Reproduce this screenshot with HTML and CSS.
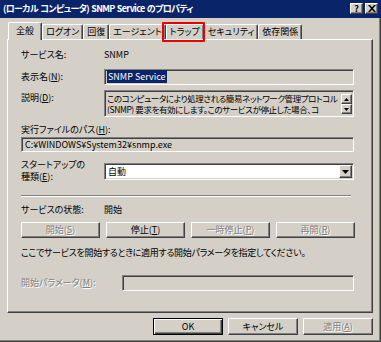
FILE: index.html
```html
<!DOCTYPE html>
<html>
<head>
	<title>SNMP Service のプロパティ</title>
	<meta charset="utf-8"/>
	<link rel="stylesheet" href="styles.css">
</head>
<body>

<div class="window">
	<div class="titlebar">
		<span class="title">(ローカル コンピュータ) SNMP Service のプロパティ</span>
		<div class="title-buttons">
			<span class="tbtn">?</span>
			<span class="tbtn">
				<svg width="8" height="7" viewBox="0 0 8 7"><path d="M0 0h2l2 2.2L6 0h2L5 3.5 8 7H6L4 4.8 2 7H0l3-3.5z" fill="#000"/></svg>
			</span>
		</div>
	</div>

	<div class="client">
		<div class="tabs">
			<div class="tab active">全般</div>
			<div class="tab">ログオン</div>
			<div class="tab">回復</div>
			<div class="tab">エージェント</div>
			<div class="tab">トラップ</div>
			<div class="tab">セキュリティ</div>
			<div class="tab">依存関係</div>
		</div>

		<div class="panel">
			<div class="row row-name">
				<span class="label">サービス名:</span>
				<span class="value">SNMP</span>
			</div>

			<div class="row row-display">
				<span class="label">表示名(<u>N</u>):</span>
				<div class="field sunken"><span class="selected">SNMP Service</span></div>
			</div>

			<div class="row row-desc">
				<span class="label label-top">説明(<u>D</u>):</span>
				<div class="field sunken desc">
					<div class="desc-text">
						<div>このコンピュータにより処理される簡易ネットワーク管理プロトコル</div>
						<div>(SNMP) 要求を有効にします。このサービスが停止した場合、コ</div>
					</div>
					<div class="scroll">
						<span class="sbtn"><svg width="5" height="3" viewBox="0 0 5 3"><path d="M2.5 0L5 3H0z" fill="#000"/></svg></span>
						<span class="sbtn"><svg width="5" height="3" viewBox="0 0 5 3"><path d="M0 0h5L2.5 3z" fill="#000"/></svg></span>
					</div>
				</div>
			</div>

			<div class="path-label">実行ファイルのパス(<u>H</u>):</div>
			<div class="field sunken path">C:¥WINDOWS¥System32¥snmp.exe</div>

			<div class="row row-startup">
				<span class="label label-two">スタートアップの<br>種類(<u>E</u>):</span>
				<div class="field sunken select">
					<span>自動</span>
					<span class="drop"><svg width="7" height="4" viewBox="0 0 7 4"><path d="M0 0h7L3.5 4z" fill="#000"/></svg></span>
				</div>
			</div>

			<div class="separator"></div>

			<div class="row row-status">
				<span class="label">サービスの状態:</span>
				<span class="value">開始</span>
			</div>

			<div class="actions">
				<span class="btn disabled">開始(<u>S</u>)</span>
				<span class="btn">停止(<u>T</u>)</span>
				<span class="btn disabled">一時停止(<u>P</u>)</span>
				<span class="btn disabled">再開(<u>R</u>)</span>
			</div>

			<p class="note">ここでサービスを開始するときに適用する開始パラメータを指定してください。</p>

			<div class="row row-params">
				<span class="label disabled wide">開始パラメータ(<u>M</u>):</span>
				<div class="field sunken params"></div>
			</div>
		</div>

		<div class="footer">
			<span class="btn default">OK</span>
			<span class="btn">キャンセル</span>
			<span class="btn disabled">適用(<u>A</u>)</span>
		</div>
	</div>

	<div class="mark"></div>
</div>

</body>
</html>
```

FILE: styles.css
```css
* {
	box-sizing: border-box;
}

body {
	margin: 0;
	background: #d4d0c8;
	color: #000;
	font-family: "Noto Sans CJK JP", sans-serif;
	font-size: 9px;
	line-height: 12px;
	font-feature-settings: "palt";
}

u {
	text-decoration: underline;
	text-underline-offset: 1px;
}

.window {
	position: relative;
	width: 381px;
	height: 342px;
	background: #d4d0c8;
	box-shadow: inset -1px -1px #404040, inset -2px -2px #808080;
}

/* title bar */
.titlebar {
	height: 18px;
	background: #0a246a;
	color: white;
	display: flex;
	align-items: center;
	justify-content: space-between;
	padding: 0 3px 0 3px;
}

.title {
	font-weight: bold;
	font-size: 9px;
	letter-spacing: -0.7px;
	word-spacing: 1px;
	white-space: nowrap;
}

.title-buttons {
	display: flex;
	gap: 2px;
	margin-top: -1px;
}

.tbtn {
	width: 13px;
	height: 11px;
	background: #d4d0c8;
	color: #000;
	font-weight: bold;
	font-size: 9px;
	line-height: 9px;
	display: flex;
	align-items: center;
	justify-content: center;
	border: 1px solid;
	border-color: #fff #404040 #404040 #fff;
	box-shadow: inset -1px -1px #808080;
}

/* tabs */
.client {
	padding: 4px 8px 0 7px;
}

.tabs {
	display: flex;
	align-items: flex-end;
	height: 17px;
	padding-left: 1px;
	position: relative;
	z-index: 2;
}

.tab {
	height: 15px;
	padding: 1px 3px 0 3px;
	white-space: nowrap;
	border-top: 1px solid #fff;
	border-left: 1px solid #fff;
	border-right: 1px solid #404040;
	box-shadow: inset -1px 0 #808080;
	border-radius: 2px 2px 0 0;
	background: #d4d0c8;
}

.tab.active {
	height: 18px;
	margin-bottom: -1px;
	padding: 2px 7px 0 7px;
}

.panel {
	height: 274px;
	border: 1px solid;
	border-color: #fff #404040 #404040 #fff;
	box-shadow: inset -1px -1px #808080;
	padding: 8px 0 0 13px;
}

/* rows */
.row {
	display: flex;
	align-items: flex-start;
}

.label {
	width: 83px;
	flex: none;
	white-space: nowrap;
}

.label.wide {
	width: 101px;
}

.row-name {
	height: 14px;
	line-height: 14px;
}

.row-display {
	margin-top: 7px;
	align-items: center;
}

.row-desc {
	margin-top: 5px;
}

.label-top {
	padding-top: 2px;
}

.field {
	width: 250px;
	background: #d4d0c8;
}

.sunken {
	border: 1px solid;
	border-color: #808080 #fff #fff #808080;
	box-shadow: inset 1px 1px #404040, inset -1px -1px #d4d0c8;
}

.row-display .field {
	height: 16px;
	padding: 1px 2px;
	line-height: 12px;
}

.selected {
	background: #0a246a;
	color: white;
	padding: 0 1px;
}

.desc {
	height: 27px;
	display: flex;
	padding: 2px 1px 2px 2px;
}

.desc-text {
	flex: 1;
	overflow: hidden;
	white-space: nowrap;
	font-size: 8.5px;
	line-height: 11px;
	letter-spacing: -0.4px;
}

.scroll {
	display: flex;
	flex-direction: column;
	width: 11px;
	flex: none;
	margin-top: 1px;
}

.sbtn {
	height: 11px;
	display: flex;
	align-items: center;
	justify-content: center;
	background: #d4d0c8;
	border: 1px solid;
	border-color: #fff #404040 #404040 #fff;
	box-shadow: inset -1px -1px #808080;
}

.path-label {
	margin-top: 7px;
	height: 12px;
	white-space: nowrap;
}

.path {
	width: 333px;
	height: 15px;
	margin-top: 1px;
	padding: 0 3px;
	line-height: 13px;
	white-space: nowrap;
}

.row-startup {
	margin-top: 7px;
}

.label-two {
	line-height: 12px;
}

.select {
	margin-top: 4px;
	height: 17px;
	background: white;
	display: flex;
	justify-content: space-between;
	align-items: center;
	padding: 1px 1px 1px 3px;
}

.drop {
	width: 13px;
	height: 13px;
	display: flex;
	align-items: center;
	justify-content: center;
	background: #d4d0c8;
	border: 1px solid;
	border-color: #fff #404040 #404040 #fff;
	box-shadow: inset -1px -1px #808080;
}

.separator {
	margin-top: 12px;
	width: 330px;
	border-top: 1px solid #808080;
	border-bottom: 1px solid #fff;
}

.row-status {
	margin-top: 6px;
	height: 14px;
	line-height: 14px;
}

/* buttons */
.actions {
	margin-top: 5px;
	width: 334px;
	display: flex;
	justify-content: space-between;
}

.btn {
	width: 79px;
	height: 16px;
	display: flex;
	align-items: center;
	justify-content: center;
	white-space: nowrap;
	background: #d4d0c8;
	border: 1px solid;
	border-color: #fff #404040 #404040 #fff;
	box-shadow: inset -1px -1px #808080;
}

.disabled {
	color: #808080;
	text-shadow: 1px 1px #fff;
}

.note {
	margin: 8px 0 0 0;
	height: 14px;
	line-height: 14px;
	white-space: nowrap;
	letter-spacing: -0.3px;
}

.row-params {
	margin-top: 15px;
	align-items: center;
}

.params {
	width: 232px;
	height: 16px;
}

.footer {
	margin-top: 5px;
	display: flex;
	justify-content: flex-end;
	gap: 5px;
}

.footer .btn {
	width: 70px;
	height: 17px;
}

.footer .btn.default {
	border: 1px solid #000;
	box-shadow: inset 1px 1px #fff, inset -1px -1px #404040, inset -2px -2px #808080;
}

/* red annotation around the trap tab */
.mark {
	position: absolute;
	left: 162px;
	top: 22px;
	width: 43px;
	height: 20px;
	border: 2px solid #ee0000;
	border-radius: 1px;
	z-index: 5;
}
```
